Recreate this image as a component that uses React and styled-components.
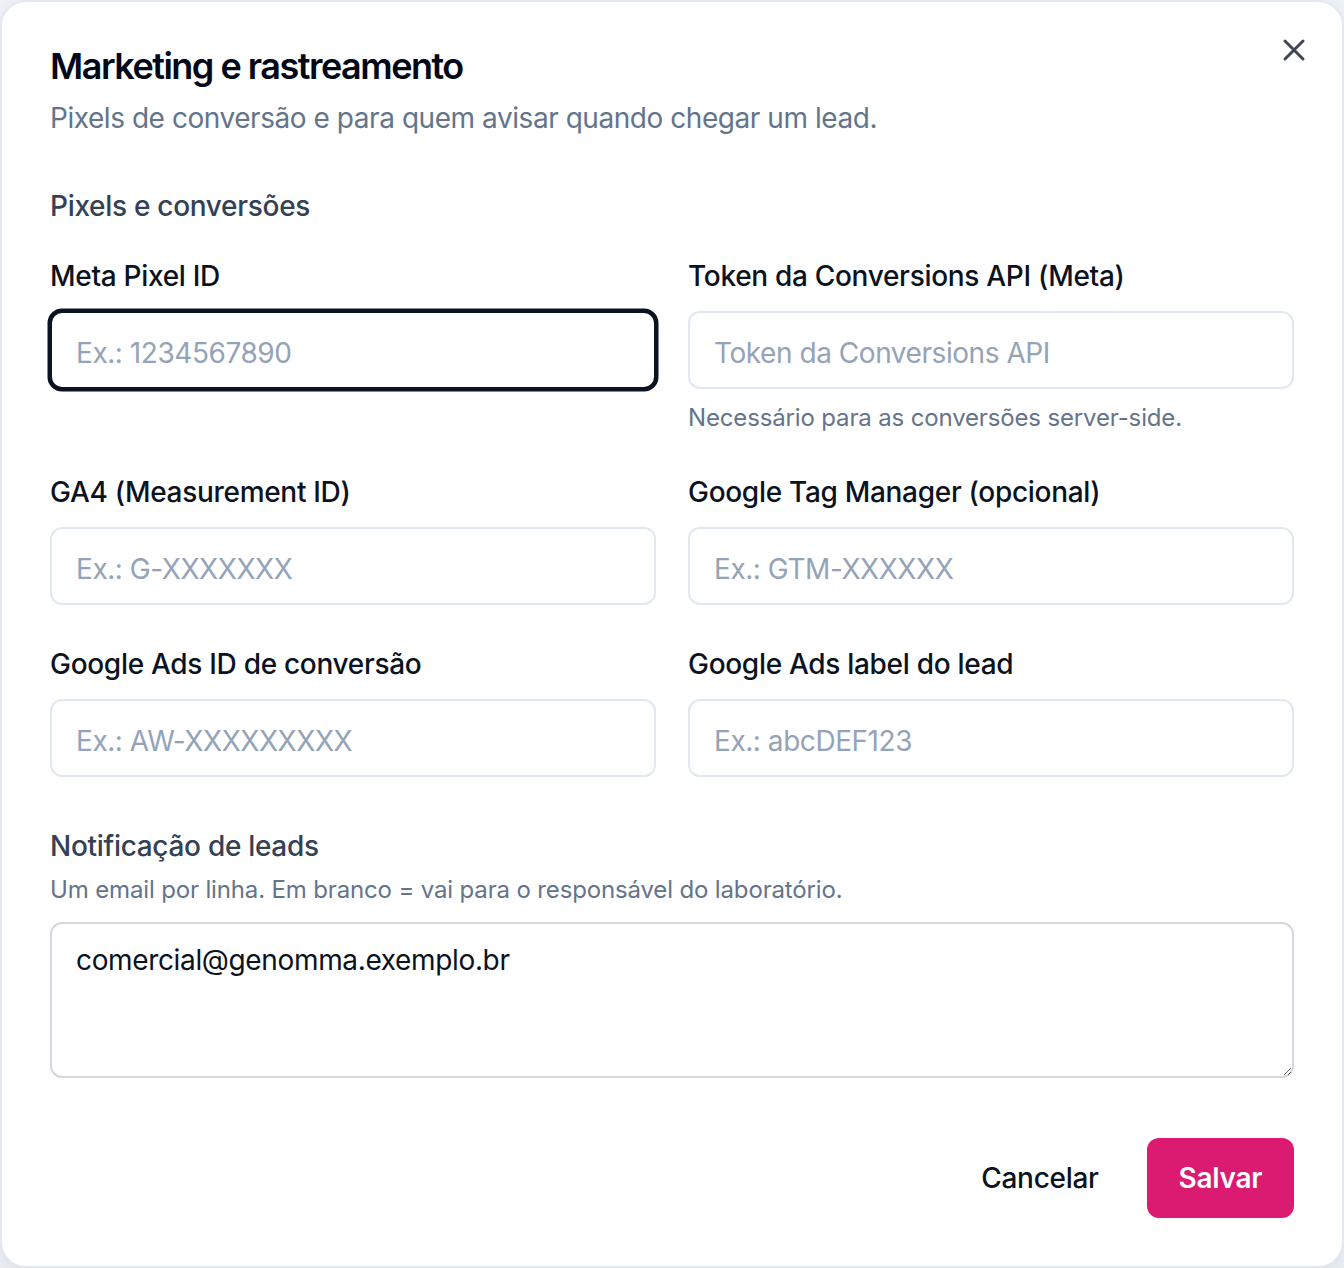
import React from "react";
import styled, { createGlobalStyle } from "styled-components";
import { X } from "lucide-react";

const GlobalStyle = createGlobalStyle`
  html, body {
    margin: 0;
    padding: 0;
    background: #eef2f6;
  }
  body {
    font-family: Inter, "Noto Sans", "Liberation Sans", sans-serif;
    -webkit-font-smoothing: antialiased;
  }
  * { box-sizing: border-box; }
`;

const Dialog = styled.section`
  position: relative;
  width: 1344px;
  min-height: 1268px;
  background: #fff;
  border: 2px solid #e2e8f0;
  border-radius: 26px;
  box-shadow: 0 8px 20px rgba(15, 23, 42, 0.08);
  padding: 40px 48px 48px;
  display: flex;
  flex-direction: column;
`;

const CloseButton = styled.button`
  position: absolute;
  top: 30px;
  right: 30px;
  width: 36px;
  height: 36px;
  padding: 0;
  border: 0;
  background: transparent;
  color: #3f4652;
  display: flex;
  align-items: center;
  justify-content: center;
  cursor: pointer;
`;

const Title = styled.h2`
  margin: 0;
  font-size: 36px;
  line-height: 48px;
  font-weight: 600;
  letter-spacing: -1.5px;
  color: #020817;
`;

const Subtitle = styled.p`
  margin: 8px 0 0;
  font-size: 28px;
  line-height: 40px;
  letter-spacing: -0.45px;
  color: #64748b;
`;

const SectionHeading = styled.h3`
  margin: ${(p) => p.$top}px 0 0;
  font-size: 28px;
  line-height: 40px;
  font-weight: 500;
  letter-spacing: -0.3px;
  color: #334155;
`;

const Grid = styled.div`
  margin-top: 30px;
  display: grid;
  grid-template-columns: 1fr 1fr;
  column-gap: 32px;
  row-gap: 39px;
  align-items: start;
`;

const Field = styled.div`
  display: flex;
  flex-direction: column;
`;

const Label = styled.label`
  font-size: 28px;
  line-height: 40px;
  font-weight: 500;
  letter-spacing: -0.3px;
  color: #0b1220;
  margin-bottom: 15px;
`;

const Input = styled.input`
  height: 78px;
  width: 100%;
  padding: 5px 24px 0;
  border: 2px solid ${(p) => (p.$focused ? "#0b1220" : "#e2e8f0")};
  border-radius: 12px;
  box-shadow: ${(p) => (p.$focused ? "0 0 0 2.5px #0b1220" : "none")};
  font-family: inherit;
  font-size: 28px;
  letter-spacing: -0.45px;
  color: #0f172a;
  background: #fff;
  outline: none;
  &::placeholder {
    color: #94a3b8;
  }
`;

const Hint = styled.p`
  margin: ${(p) => p.$top}px 0 0;
  font-size: 24px;
  line-height: ${(p) => p.$lh || 32}px;
  letter-spacing: -0.15px;
  color: #64748b;
`;

const TextArea = styled.textarea`
  margin-top: 16px;
  width: 100%;
  height: 156px;
  padding: 16px 24px;
  border: 2px solid #d4d8de;
  border-radius: 12px;
  font-family: inherit;
  font-size: 28px;
  line-height: 40px;
  letter-spacing: -0.35px;
  color: #0b1220;
  background: #fff;
  outline: none;
`;

const Footer = styled.footer`
  margin-top: 60px;
  display: flex;
  justify-content: flex-end;
  gap: 16px;
`;

const Button = styled.button`
  height: 80px;
  padding: 0 32px;
  border: 0;
  border-radius: 12px;
  font-family: inherit;
  font-size: 28px;
  letter-spacing: -0.3px;
  font-weight: ${(p) => (p.$primary ? 600 : 500)};
  color: ${(p) => (p.$primary ? "#fff" : "#0b1220")};
  background: ${(p) => (p.$primary ? "#db1a72" : "transparent")};
  cursor: pointer;
`;

const fields = [
  { label: "Meta Pixel ID", placeholder: "Ex.: 1234567890", focused: true },
  {
    label: "Token da Conversions API (Meta)",
    placeholder: "Token da Conversions API",
    hint: "Necessário para as conversões server-side.",
  },
  { label: "GA4 (Measurement ID)", placeholder: "Ex.: G-XXXXXXX" },
  { label: "Google Tag Manager (opcional)", placeholder: "Ex.: GTM-XXXXXX" },
  { label: "Google Ads ID de conversão", placeholder: "Ex.: AW-XXXXXXXXX" },
  { label: "Google Ads label do lead", placeholder: "Ex.: abcDEF123" },
];

export default function App() {
  return (
    <>
      <GlobalStyle />
      <Dialog role="dialog">
        <CloseButton aria-label="Fechar">
          <X size={36} strokeWidth={2} />
        </CloseButton>
        <Title>Marketing e rastreamento</Title>
        <Subtitle>Pixels de conversão e para quem avisar quando chegar um lead.</Subtitle>

        <SectionHeading $top={48}>Pixels e conversões</SectionHeading>
        <Grid>
          {fields.map((f) => (
            <Field key={f.label}>
              <Label>{f.label}</Label>
              <Input placeholder={f.placeholder} $focused={f.focused} />
              {f.hint && (
                <Hint $top={14} $lh={30}>
                  {f.hint}
                </Hint>
              )}
            </Field>
          ))}
        </Grid>

        <SectionHeading $top={49}>Notificação de leads</SectionHeading>
        <Hint $top={8}>Um email por linha. Em branco = vai para o responsável do laboratório.</Hint>
        <TextArea defaultValue="comercial@genomma.exemplo.br" />

        <Footer>
          <Button>Cancelar</Button>
          <Button $primary>Salvar</Button>
        </Footer>
      </Dialog>
    </>
  );
}
